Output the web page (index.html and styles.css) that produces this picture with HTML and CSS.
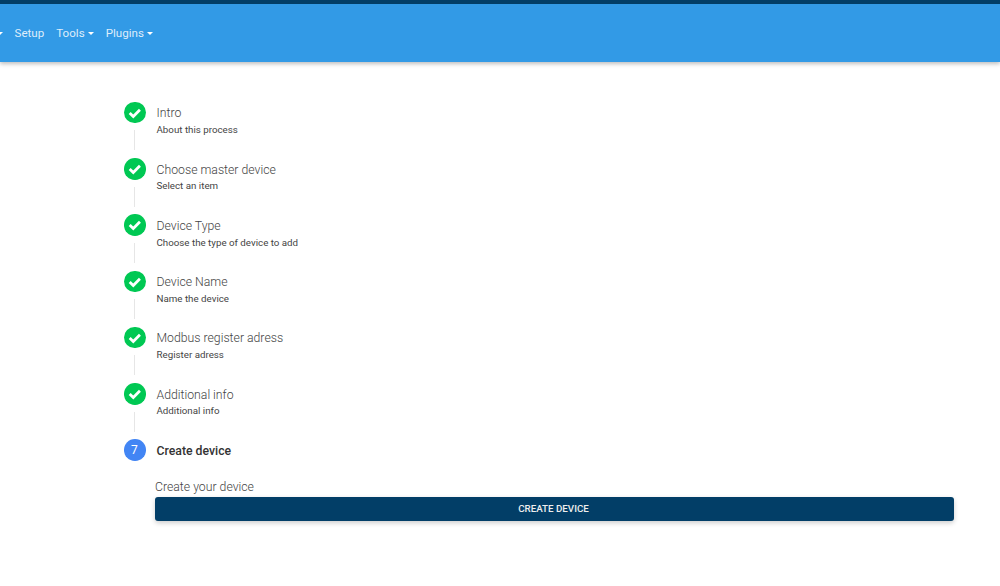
FILE: index.html
```html
<!DOCTYPE html>
<html lang="en">
<head>
<meta charset="utf-8">
<title>Create device</title>
<link rel="stylesheet" href="styles.css">
</head>
<body>
<header class="topbar">
  <nav class="nav">
    <span class="caret"></span>
    <a class="nav-link">Setup</a>
    <a class="nav-link">Tools<span class="caret"></span></a>
    <a class="nav-link">Plugins<span class="caret"></span></a>
  </nav>
</header>
<main class="stepper">
  <div class="step">
    <div class="rail"><span class="dot done"><svg viewBox="0 0 22 22" class="check"><path d="M5.8 11.2l3.7 3.7 6.8-7"/></svg></span><span class="line"></span></div>
    <div class="label"><div class="title">Intro</div><div class="sub">About this process</div></div>
  </div>
  <div class="step">
    <div class="rail"><span class="dot done"><svg viewBox="0 0 22 22" class="check"><path d="M5.8 11.2l3.7 3.7 6.8-7"/></svg></span><span class="line"></span></div>
    <div class="label"><div class="title">Choose master device</div><div class="sub">Select an item</div></div>
  </div>
  <div class="step">
    <div class="rail"><span class="dot done"><svg viewBox="0 0 22 22" class="check"><path d="M5.8 11.2l3.7 3.7 6.8-7"/></svg></span><span class="line"></span></div>
    <div class="label"><div class="title">Device Type</div><div class="sub">Choose the type of device to add</div></div>
  </div>
  <div class="step">
    <div class="rail"><span class="dot done"><svg viewBox="0 0 22 22" class="check"><path d="M5.8 11.2l3.7 3.7 6.8-7"/></svg></span><span class="line"></span></div>
    <div class="label"><div class="title">Device Name</div><div class="sub">Name the device</div></div>
  </div>
  <div class="step">
    <div class="rail"><span class="dot done"><svg viewBox="0 0 22 22" class="check"><path d="M5.8 11.2l3.7 3.7 6.8-7"/></svg></span><span class="line"></span></div>
    <div class="label"><div class="title">Modbus register adress</div><div class="sub">Register adress</div></div>
  </div>
  <div class="step">
    <div class="rail"><span class="dot done"><svg viewBox="0 0 22 22" class="check"><path d="M5.8 11.2l3.7 3.7 6.8-7"/></svg></span><span class="line"></span></div>
    <div class="label"><div class="title">Additional info</div><div class="sub">Additional info</div></div>
  </div>
  <div class="step step-last">
    <div class="rail"><span class="dot active">7</span></div>
    <div class="label"><div class="title title-active">Create device</div></div>
  </div>
  <div class="content">
    <div class="content-text">Create your device</div>
    <button class="btn">CREATE DEVICE</button>
  </div>
</main>
</body>
</html>
```
FILE: styles.css
```css
* { box-sizing: border-box; }
html, body { margin: 0; height: 100%; }
body {
  background: #fff;
  font-family: Roboto, "Liberation Sans", sans-serif;
  overflow: hidden;
}
.topbar {
  height: 62px;
  background: #329ae6;
  border-top: 4px solid #023e67;
  box-shadow: 0 2px 4px rgba(0,0,0,.25);
  display: flex;
  align-items: center;
}
.nav {
  display: flex;
  align-items: center;
  margin-left: -3px;
  font-size: 11.6px;
  color: rgba(255,255,255,.85);
}
.nav > .caret { margin-left: 0; margin-right: 11.5px; }
.nav-link { margin-right: 12px; white-space: nowrap; }
.caret {
  display: inline-block;
  width: 0;
  height: 0;
  margin-left: 3px;
  vertical-align: 2px;
  border-top: 3.5px solid #fff;
  border-left: 3.5px solid transparent;
  border-right: 3.5px solid transparent;
}
.stepper { padding: 40px 46px 0 124px; }
.step { display: flex; height: 56.3px; }
.step-last { height: 39px; }
.rail {
  width: 21.5px;
  margin-right: 11px;
  display: flex;
  flex-direction: column;
  align-items: center;
  margin-top: -0.3px;
}
.dot {
  flex: none;
  width: 21.5px;
  height: 21.5px;
  border-radius: 50%;
  display: flex;
  align-items: center;
  justify-content: center;
  color: #fff;
  font-size: 12px;
  padding-right: 1px;
}
.done { background: #00c853; padding-right: 0; }
.active { background: #4285f4; }
.check { width: 21.5px; height: 21.5px; }
.check path { fill: none; stroke: #fff; stroke-width: 2.8; }
.line {
  width: 1px;
  height: 20px;
  margin-top: 7px;
  background: #e6e6e6;
}
.label { padding-top: 3.3px; }
.title {
  font-size: 12.25px;
  font-weight: 300;
  line-height: 16px;
  color: #444;
}
.title-active { font-weight: 500; color: #333; }
.sub {
  margin-top: 1.7px;
  font-size: 9.75px;
  line-height: 13px;
  font-weight: 400;
  color: #444;
}
.content { padding-left: 31px; }
.content-text {
  font-size: 12.25px;
  font-weight: 300;
  line-height: 16px;
  color: #444;
}
.btn {
  display: block;
  width: 799px;
  height: 24px;
  margin: 2px 0 0;
  padding: 0 2px 0 0;
  border: 0;
  border-radius: 3px;
  background: #023e67;
  color: #eee;
  font-family: inherit;
  font-size: 9.75px;
  font-weight: 500;
  box-shadow: 0 2px 5px rgba(0,0,0,.2);
}
```
